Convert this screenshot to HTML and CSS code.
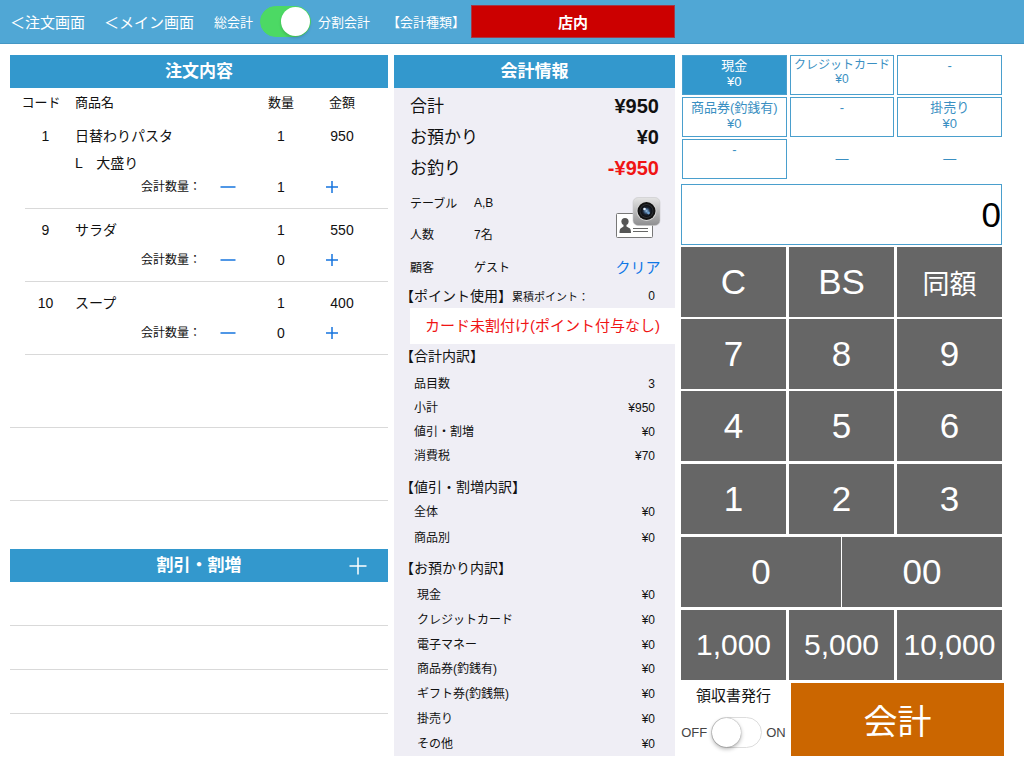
FILE: index.html
```html
<!DOCTYPE html>
<html lang="ja">
<head>
<meta charset="utf-8">
<meta name="viewport" content="width=device-width, initial-scale=1">
<title>会計</title>
<link rel="stylesheet" href="styles.css">
</head>
<body>
<svg class="sprite" aria-hidden="true">
  <symbol id="minus" viewBox="0 0 16 16"><path d="M0.5 8h15" stroke="currentColor" stroke-width="1.5"/></symbol>
  <symbol id="plus" viewBox="0 0 16 16"><path d="M2 8h12M8 2v12" stroke="currentColor" stroke-width="1.5"/></symbol>
</svg>

<header class="topbar">
  <nav class="topbar-nav">
    <a href="#order">＜注文画面</a>
    <a href="#main">＜メイン画面</a>
  </nav>
  <div class="mode">
    <label for="split">総会計</label>
    <input class="switch" type="checkbox" id="split" aria-label="分割会計" checked>
    <label for="split">分割会計</label>
  </div>
  <span class="kind-label" id="kind">【会計種類】</span>
  <button class="kind-button" type="button" aria-describedby="kind">店内</button>
</header>

<main class="layout">
  <div class="orders">
    <section class="order-list">
      <h2 class="heading">注文内容</h2>
      <table class="order-table">
        <colgroup><col class="c-gutter"><col class="c-code"><col><col class="c-minus"><col class="c-qty"><col class="c-price"></colgroup>
        <thead>
          <tr><th class="code" colspan="2">コード</th><th class="name" colspan="2">商品名</th><th>数量</th><th class="price">金額</th></tr>
        </thead>
        <tbody>
          <tr class="item"><td></td><td>1</td><td class="name" colspan="2">日替わりパスタ</td><td>1</td><td class="price">950</td></tr>
          <tr class="option"><td></td><td></td><td class="name" colspan="4">L　大盛り</td></tr>
          <tr class="count"><td class="blank"></td><td></td><td class="count-label">会計数量：</td><td><button type="button" class="step" aria-label="減らす"><svg><use href="#minus"/></svg></button></td><td>1</td><td class="plus"><button type="button" class="step" aria-label="増やす"><svg><use href="#plus"/></svg></button></td></tr>
        </tbody>
        <tbody>
          <tr class="item single"><td></td><td>9</td><td class="name" colspan="2">サラダ</td><td>1</td><td class="price">550</td></tr>
          <tr class="count"><td class="blank"></td><td></td><td class="count-label">会計数量：</td><td><button type="button" class="step" aria-label="減らす"><svg><use href="#minus"/></svg></button></td><td>0</td><td class="plus"><button type="button" class="step" aria-label="増やす"><svg><use href="#plus"/></svg></button></td></tr>
        </tbody>
        <tbody>
          <tr class="item single"><td></td><td>10</td><td class="name" colspan="2">スープ</td><td>1</td><td class="price">400</td></tr>
          <tr class="count"><td class="blank"></td><td></td><td class="count-label">会計数量：</td><td><button type="button" class="step" aria-label="減らす"><svg><use href="#minus"/></svg></button></td><td>0</td><td class="plus"><button type="button" class="step" aria-label="増やす"><svg><use href="#plus"/></svg></button></td></tr>
        </tbody>
      </table>
      <div class="empty-row"></div>
      <div class="empty-row"></div>
    </section>
    <section class="discounts">
      <div class="heading heading-action">
        <h2>割引・割増</h2>
        <button type="button" class="add" aria-label="追加"><svg viewBox="0 0 18 18"><path d="M0.5 9h17M9 0.5v17" stroke="currentColor" stroke-width="1.5"/></svg></button>
      </div>
      <div class="empty-row short"></div>
      <div class="empty-row short"></div>
      <div class="empty-row short"></div>
    </section>
  </div>

  <section class="summary">
    <h2 class="heading">会計情報</h2>
    <dl class="totals">
      <div><dt>合計</dt><dd>¥950</dd></div>
      <div><dt>お預かり</dt><dd>¥0</dd></div>
      <div><dt>お釣り</dt><dd class="negative">-¥950</dd></div>
    </dl>
    <div class="guest">
      <span>テーブル</span><span>A,B</span>
      <button type="button" class="scan" aria-label="会員カード読取">
        <svg viewBox="0 0 46 42">
          <defs>
            <linearGradient id="metal" x1="0" y1="0" x2="0" y2="1"><stop offset="0" stop-color="#e4e4e4"/><stop offset="1" stop-color="#8e8e90"/></linearGradient>
            <radialGradient id="lens"><stop offset="0" stop-color="#9fc4e4"/><stop offset="0.3" stop-color="#4b6f96"/><stop offset="0.6" stop-color="#1a2230"/><stop offset="1" stop-color="#0b0c0e"/></radialGradient>
          </defs>
          <rect x="1.5" y="16.500" width="36" height="24" rx="1" fill="#fff" stroke="#777"/>
          <circle cx="10" cy="24.500" r="3.600" fill="#555"/>
          <path d="M8.500 27h3v2.500l3.500 2c.7.8 1 2.500 1 4.500H4.500c0-2 .3-3.700 1-4.500l3-2z" fill="#555"/>
          <path d="M18 31.500h15M18 34.500h15" stroke="#666" stroke-width="1.200"/>
          <rect x="18" y="0.500" width="27" height="28" rx="5" fill="url(#metal)" stroke="#c8c8ca" stroke-width="0.600"/>
          <circle cx="31.500" cy="14" r="10" fill="#d5d5d5"/>
          <circle cx="31.500" cy="14" r="9" fill="#111"/>
          <circle cx="31.500" cy="14" r="7" fill="#2b2e33"/>
          <circle cx="31.500" cy="14" r="6" fill="url(#lens)"/>
          <circle cx="29.500" cy="12" r="1.300" fill="#e4f2ff"/>
          <circle cx="33.500" cy="16" r="1.400" fill="#6ea0cf"/>
        </svg>
      </button>
      <span>人数</span><span>7名</span>
      <span>顧客</span><span>ゲスト</span>
      <button type="button" class="clear">クリア</button>
    </div>
    <div class="points"><h3>【ポイント使用】</h3><span class="points-label">累積ポイント：</span><span class="points-value">0</span></div>
    <p class="notice">カード未割付け(ポイント付与なし)</p>
    <h3 class="group-title">【合計内訳】</h3>
    <dl class="rows">
      <div><dt>品目数</dt><dd>3</dd></div>
      <div><dt>小計</dt><dd>¥950</dd></div>
      <div><dt>値引・割増</dt><dd>¥0</dd></div>
      <div><dt>消費税</dt><dd>¥70</dd></div>
    </dl>
    <h3 class="group-title">【値引・割増内訳】</h3>
    <dl class="rows roomy">
      <div><dt>全体</dt><dd>¥0</dd></div>
      <div><dt>商品別</dt><dd>¥0</dd></div>
    </dl>
    <h3 class="group-title">【お預かり内訳】</h3>
    <dl class="rows fill">
      <div><dt>現金</dt><dd>¥0</dd></div>
      <div><dt>クレジットカード</dt><dd>¥0</dd></div>
      <div><dt>電子マネー</dt><dd>¥0</dd></div>
      <div><dt>商品券(釣銭有)</dt><dd>¥0</dd></div>
      <div><dt>ギフト券(釣銭無)</dt><dd>¥0</dd></div>
      <div><dt>掛売り</dt><dd>¥0</dd></div>
      <div><dt>その他</dt><dd>¥0</dd></div>
    </dl>
  </section>

  <section class="register">
    <div class="methods">
      <button type="button" class="method selected">現金<br>¥0</button>
      <button type="button" class="method small">クレジットカード<br>¥0</button>
      <button type="button" class="method">-</button>
      <button type="button" class="method">商品券(釣銭有)<br>¥0</button>
      <button type="button" class="method">-</button>
      <button type="button" class="method">掛売り<br>¥0</button>
      <button type="button" class="method">-</button>
      <button type="button" class="method plain">—</button>
      <button type="button" class="method plain">—</button>
    </div>
    <input class="amount" type="text" value="0" aria-label="金額" readonly>
    <div class="keypad">
      <div class="keys tight">
        <button type="button" class="key">C</button><button type="button" class="key">BS</button><button type="button" class="key kanji">同額</button>
        <button type="button" class="key">7</button><button type="button" class="key">8</button><button type="button" class="key">9</button>
        <button type="button" class="key">4</button><button type="button" class="key">5</button><button type="button" class="key">6</button>
      </div>
      <div class="keys">
        <button type="button" class="key">1</button><button type="button" class="key">2</button><button type="button" class="key">3</button>
      </div>
      <div class="keys zeros">
        <button type="button" class="key">0</button><button type="button" class="key">00</button>
      </div>
      <div class="keys">
        <button type="button" class="key bill">1,000</button><button type="button" class="key bill">5,000</button><button type="button" class="key bill">10,000</button>
      </div>
    </div>
    <div class="finish">
      <div class="receipt">
        <label for="receipt">領収書発行</label>
        <div class="receipt-switch"><span>OFF</span><input class="switch" type="checkbox" id="receipt"><span>ON</span></div>
      </div>
      <button type="button" class="pay">会計</button>
    </div>
  </section>
</main>
</body>
</html>
```
FILE: styles.css
```css
* { box-sizing: border-box; }

body {
  margin: 0;
  min-height: 100vh;
  display: flex;
  flex-direction: column;
  background: #fff;
  color: #111;
  font-family: "Liberation Sans", "Noto Sans CJK JP", sans-serif;
  font-size: 14px;
}

h2, h3, p, dl, dd { margin: 0; }

button {
  font: inherit;
  color: inherit;
  border: 0;
  padding: 0;
  background: none;
  border-radius: 0;
  cursor: pointer;
}

.sprite { display: none; }

.topbar {
  height: 44px;
  display: flex;
  align-items: center;
  padding-left: 10px;
  background: #50a7d5;
  border-bottom: 1px solid #4597c4;
  color: #fff;
  font-size: 13px;
}

.topbar-nav { display: flex; gap: 19px; font-size: 15px; }
.topbar-nav a { color: inherit; text-decoration: none; }
.mode { display: flex; align-items: center; gap: 7px; margin-left: 20px; }
.kind-label { margin-left: 17px; }

.kind-button {
  width: 204px;
  height: 33px;
  margin-left: 6px;
  background: #c00;
  border: 1px solid #a33a4a;
  font-size: 15px;
  font-weight: bold;
}

.switch {
  appearance: none;
  flex: none;
  width: 51px;
  height: 31px;
  margin: 0;
  display: flex;
  border-radius: 16px;
  border: 1px solid #ddd;
  background: #fff;
}
.switch::before {
  content: "";
  width: 29px;
  height: 29px;
  border-radius: 50%;
  background: #fff;
  box-shadow: 0 2px 4px rgba(0, 0, 0, 0.3), 0 0 1px rgba(0, 0, 0, 0.5);
}
.switch:checked { background: #4cd964; border-color: #4cd964; justify-content: flex-end; }
.switch:checked::before { box-shadow: 0 2px 3px rgba(0, 0, 0, 0.15); }

.layout {
  flex: 1;
  display: grid;
  grid-template-columns: minmax(0, 378fr) minmax(0, 281fr) minmax(0, 323fr);
  gap: 6px;
  padding: 11px 20px 12px 10px;
}

.heading {
  height: 33px;
  line-height: 33px;
  background: #3398cd;
  color: #fff;
  font-size: 17px;
  font-weight: bold;
  text-align: center;
}
.heading-action { display: grid; grid-template-columns: 60px 1fr 60px; align-items: center; }
.heading-action h2 { grid-column: 2; font-size: inherit; }
.add { height: 33px; display: flex; align-items: center; justify-content: center; }
.add svg { width: 18px; height: 18px; }

.orders { display: flex; flex-direction: column; }
.order-list { flex: 1; }
.discounts { padding-bottom: 42px; }

.order-table { width: 100%; table-layout: fixed; border-collapse: collapse; }
.c-gutter { width: 15px; }
.c-code { width: 41px; }
.c-minus { width: 44px; }
.c-qty { width: 62px; }
.c-price { width: 76px; }
.order-table th { height: 27px; padding: 0; font-size: 13px; font-weight: normal; }
.order-table td { padding: 0; text-align: center; line-height: 26px; }
.order-table .code { padding-left: 6px; }
.order-table .name { padding-left: 9px; text-align: left; }
.order-table .price { padding-right: 16px; }
.order-table .item td { padding-top: 8px; }
.order-table .single td { padding-bottom: 7px; }
.order-table .option td { line-height: 28px; }
.order-table .count td { line-height: 20px; padding-bottom: 11px; border-bottom: 1px solid #d9d9d9; vertical-align: top; }
.order-table .count .blank { border: 0; }
.order-table .count .count-label { padding-right: 5px; font-size: 12px; text-align: right; white-space: nowrap; }
.order-table .count .plus { text-align: left; }
.step { width: 40px; height: 20px; color: #1674de; vertical-align: top; }
.step svg { display: block; width: 16px; height: 16px; margin: 0 auto; }

.empty-row { height: 73px; border-bottom: 1px solid #d9d9d9; }
.empty-row.short { height: 44px; }

.summary { display: flex; flex-direction: column; background: #efeef5; }

.totals { padding: 3px 16px 0; font-size: 17px; }
.totals div { display: flex; justify-content: space-between; line-height: 31px; }
.totals dd { font-size: 20px; font-weight: bold; }
.totals .negative { color: #f01414; }

.guest {
  display: grid;
  grid-template-columns: 64px 1fr auto;
  grid-template-rows: 31px 31px 35px;
  align-items: center;
  padding: 3px 14px 0 16px;
  font-size: 12px;
}
.scan { grid-column: 3; grid-row: 1 / span 2; }
.scan svg { display: block; width: 46px; height: 42px; }
.clear { color: #0f77e6; font-size: 15px; }

.points { display: flex; align-items: center; height: 24px; padding: 0 20px 0 6px; }
.points h3, .group-title { font-size: 14px; font-weight: normal; line-height: 24px; }
.points-label { font-size: 11px; }
.points-value { margin-left: auto; font-size: 12px; }

.notice {
  margin-left: 16px;
  padding-right: 15px;
  background: #fff;
  color: #f01414;
  font-size: 15px;
  line-height: 36px;
  text-align: right;
}

.group-title { padding-left: 6px; }
.rows { padding: 4px 20px 7px; font-size: 12px; }
.rows div { display: flex; justify-content: space-between; line-height: 24px; }
.rows.roomy { padding-top: 0; padding-bottom: 5px; }
.rows.roomy div { line-height: 26px; }
.rows.fill { flex: 1; display: grid; grid-auto-rows: 1fr; padding: 3px 20px 0 23px; }
.rows.fill div { align-items: center; }

.register { display: flex; flex-direction: column; }

.methods {
  display: grid;
  grid-template-columns: repeat(3, minmax(0, 1fr));
  gap: 2px 3px;
  padding: 0 2px 0 1px;
}
.method {
  height: 40px;
  display: block;
  padding: 2px 0;
  border: 1px solid #4a9fcd;
  color: #3a8fc2;
  font-size: 13px;
  line-height: 16px;
  white-space: nowrap;
  display: flex;
  justify-content: center;
}
.method.small { font-size: 12px; line-height: 14px; }
.method.selected { background: #3398cd; color: #fff; }
.method.plain { border-color: transparent; align-items: center; }

.amount {
  width: calc(100% - 2px);
  height: 61px;
  margin: 5px 0 2px;
  padding: 0;
  border: 1px solid #4a9fcd;
  border-radius: 0;
  background: #fff;
  color: #000;
  font: 35px "Liberation Sans", sans-serif;
  text-align: right;
}

.keypad { display: flex; flex-direction: column; gap: 3px; margin: 0 2px 3px 0; }
.keys { display: grid; grid-template-columns: repeat(3, minmax(0, 1fr)); grid-auto-rows: 70px; column-gap: 3px; }
.keys.tight { row-gap: 2px; }
.keys.zeros { grid-template-columns: 1fr 1fr; column-gap: 1px; }
.key { background: #666; color: #fff; font-size: 35px; }
.key.kanji { font-size: 27px; }
.key.bill { font-size: 30px; }

.finish { flex: 1; display: grid; grid-template-columns: 105px 1fr; gap: 5px; }
.receipt { display: flex; flex-direction: column; align-items: center; font-size: 15px; }
.receipt label { line-height: 26px; }
.receipt-switch { display: flex; align-items: center; gap: 4px; margin-top: 8px; color: #444; font-size: 13px; }
.pay { min-height: 73px; background: #cb6600; color: #fff; font-size: 34px; }
```
